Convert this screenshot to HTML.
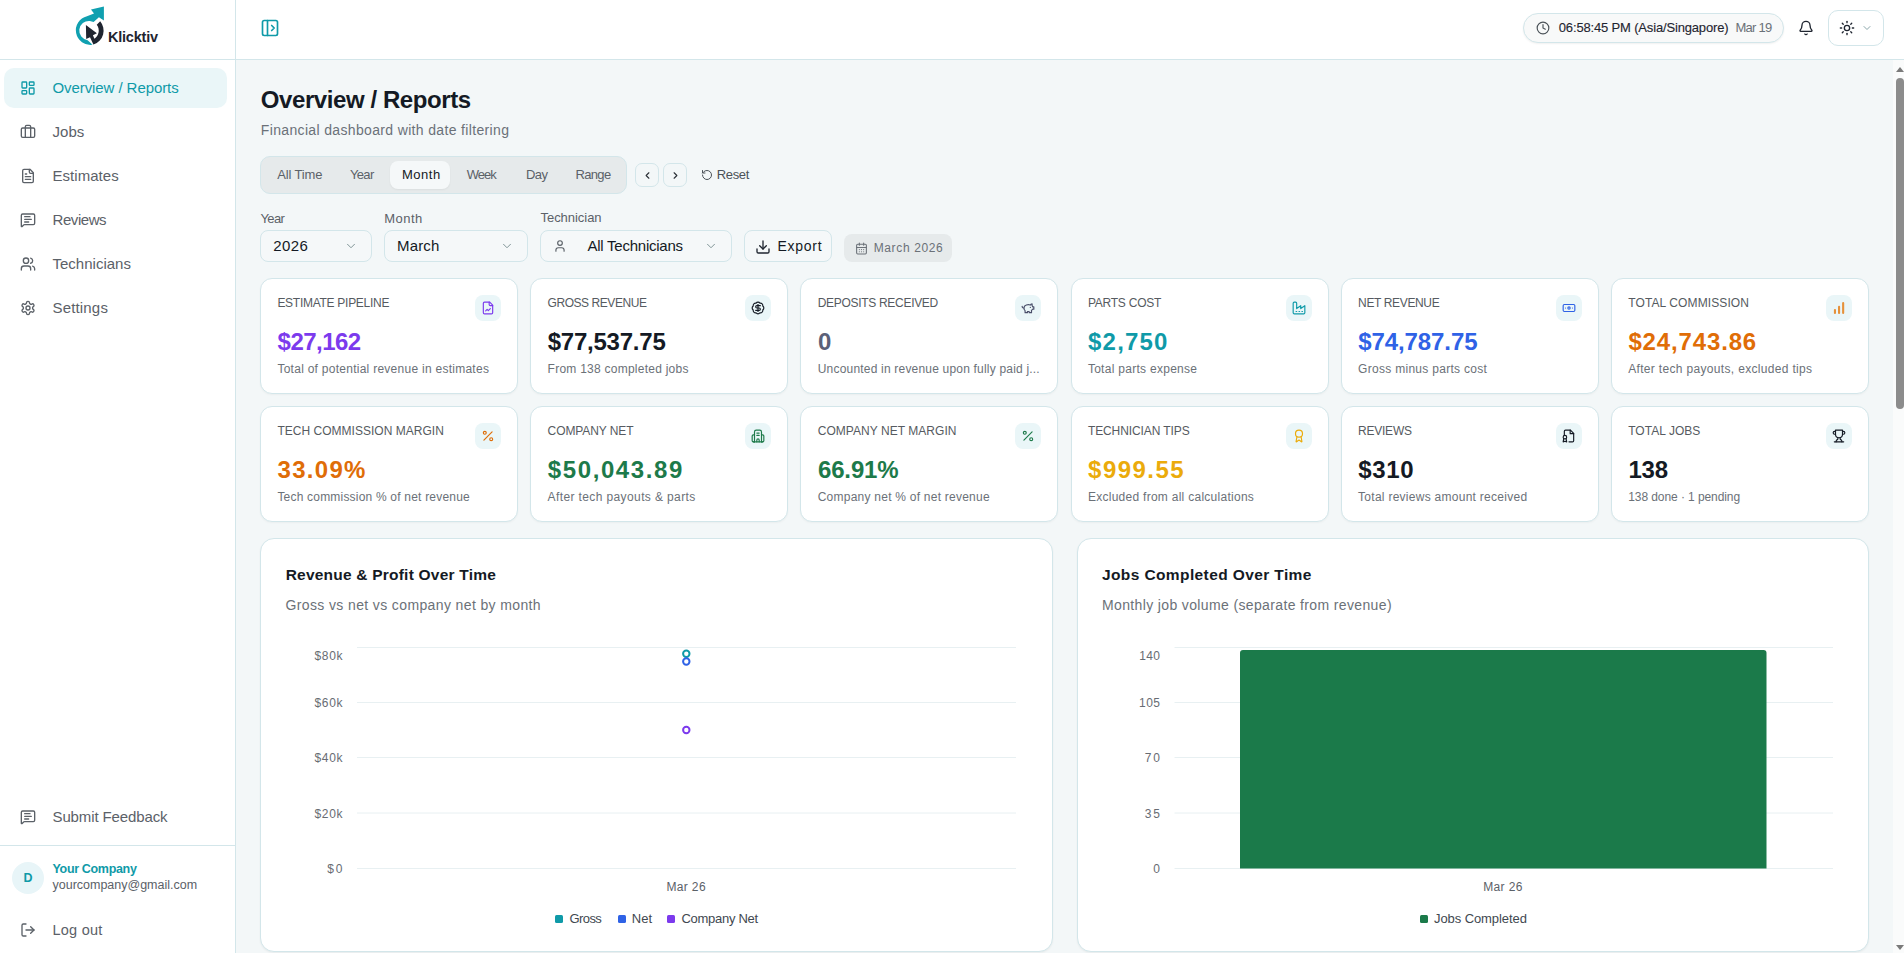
<!DOCTYPE html><html><head><meta charset="utf-8"><title>Overview / Reports</title><style>
html,body{margin:0;padding:0;width:1904px;height:953px;overflow:hidden;font-family:"Liberation Sans", sans-serif;background:#f3f7f8;}
*{box-sizing:border-box;}
</style></head><body>
<div style="position:absolute;left:0px;top:0px;width:236px;height:953px;box-sizing:border-box;background:#ffffff;border-right:1px solid #d3e6ea;"></div>
<div style="position:absolute;left:0px;top:59px;width:235px;height:1px;box-sizing:border-box;background:#d3e6ea;"></div>
<svg style="position:absolute;left:60px;top:0px" width="120" height="60" viewBox="60 0 120 60">
<path d="M92.53 44.77 A14.6 14.6 0 0 1 86.97 16.14 L94 13.6 L91 9.6 L103.9 6.4 L103.9 20.4 L98.9 17.2 L93.6 21.9 L89.85 20.94 A9.7 9.7 0 0 0 87.65 40.21 Z" fill="#10a0b0"/>
<path d="M100.18 21.22 A14.6 14.6 0 0 1 93.99 44.32 L93.55 39.16 A9.7 9.7 0 0 0 96.75 24.76 Z" fill="#1f2530"/>
<path d="M85.9 25.0 L96.9 33.2 L92.9 35.2 L95.6 41.5 L93.5 44.8 L90.0 37.2 L86.2 39.0 Z" fill="#1f2530"/>
</svg>
<div style="position:absolute;left:108px;top:29.93px;font-size:14.5px;line-height:14.5px;color:#1f2530;font-weight:700;letter-spacing:-0.219px;white-space:nowrap;">Klicktiv</div>
<div style="position:absolute;left:4px;top:68px;width:223px;height:40px;box-sizing:border-box;background:#eaf6f8;border-radius:10px;"></div>
<svg style="position:absolute;left:20px;top:80px" width="16" height="16" viewBox="0 0 24 24" fill="none" stroke="#0f9aa8" stroke-width="2" stroke-linecap="round" stroke-linejoin="round" ><rect width="7" height="9" x="3" y="3" rx="1"/><rect width="7" height="5" x="14" y="3" rx="1"/><rect width="7" height="9" x="14" y="12" rx="1"/><rect width="7" height="5" x="3" y="16" rx="1"/></svg>
<div style="position:absolute;left:52.5px;top:79.80px;font-size:15px;line-height:15px;color:#0f9aa8;font-weight:400;letter-spacing:-0.081px;white-space:nowrap;">Overview / Reports</div>
<svg style="position:absolute;left:20px;top:124px" width="16" height="16" viewBox="0 0 24 24" fill="none" stroke="#5b6168" stroke-width="2" stroke-linecap="round" stroke-linejoin="round" ><path d="M16 20V4a2 2 0 0 0-2-2h-4a2 2 0 0 0-2 2v16"/><rect width="20" height="14" x="2" y="6" rx="2"/></svg>
<div style="position:absolute;left:52.5px;top:123.80px;font-size:15px;line-height:15px;color:#5b6168;font-weight:400;letter-spacing:0.033px;white-space:nowrap;">Jobs</div>
<svg style="position:absolute;left:20px;top:168px" width="16" height="16" viewBox="0 0 24 24" fill="none" stroke="#5b6168" stroke-width="2" stroke-linecap="round" stroke-linejoin="round" ><path d="M15 2H6a2 2 0 0 0-2 2v16a2 2 0 0 0 2 2h12a2 2 0 0 0 2-2V7Z"/><path d="M14 2v4a2 2 0 0 0 2 2h4"/><path d="M10 9H8"/><path d="M16 13H8"/><path d="M16 17H8"/></svg>
<div style="position:absolute;left:52.5px;top:167.80px;font-size:15px;line-height:15px;color:#5b6168;font-weight:400;letter-spacing:0.047px;white-space:nowrap;">Estimates</div>
<svg style="position:absolute;left:20px;top:212px" width="16" height="16" viewBox="0 0 24 24" fill="none" stroke="#5b6168" stroke-width="2" stroke-linecap="round" stroke-linejoin="round" ><path d="M22 17a2 2 0 0 1-2 2H6.828a2 2 0 0 0-1.414.586l-2.202 2.202A.71.71 0 0 1 2 21.286V5a2 2 0 0 1 2-2h16a2 2 0 0 1 2 2z"/><path d="M7 11h10"/><path d="M7 15h6"/><path d="M7 7h8"/></svg>
<div style="position:absolute;left:52.5px;top:211.80px;font-size:15px;line-height:15px;color:#5b6168;font-weight:400;letter-spacing:-0.429px;white-space:nowrap;">Reviews</div>
<svg style="position:absolute;left:20px;top:256px" width="16" height="16" viewBox="0 0 24 24" fill="none" stroke="#5b6168" stroke-width="2" stroke-linecap="round" stroke-linejoin="round" ><path d="M16 21v-2a4 4 0 0 0-4-4H6a4 4 0 0 0-4 4v2"/><circle cx="9" cy="7" r="4"/><path d="M22 21v-2a4 4 0 0 0-3-3.87"/><path d="M16 3.13a4 4 0 0 1 0 7.75"/></svg>
<div style="position:absolute;left:52.5px;top:255.80px;font-size:15px;line-height:15px;color:#5b6168;font-weight:400;letter-spacing:0.005px;white-space:nowrap;">Technicians</div>
<svg style="position:absolute;left:20px;top:300px" width="16" height="16" viewBox="0 0 24 24" fill="none" stroke="#5b6168" stroke-width="2" stroke-linecap="round" stroke-linejoin="round" ><path d="M12.22 2h-.44a2 2 0 0 0-2 2v.18a2 2 0 0 1-1 1.73l-.43.25a2 2 0 0 1-2 0l-.15-.08a2 2 0 0 0-2.73.73l-.22.38a2 2 0 0 0 .73 2.73l.15.1a2 2 0 0 1 1 1.72v.51a2 2 0 0 1-1 1.74l-.15.09a2 2 0 0 0-.73 2.73l.22.38a2 2 0 0 0 2.73.73l.15-.08a2 2 0 0 1 2 0l.43.25a2 2 0 0 1 1 1.73V20a2 2 0 0 0 2 2h.44a2 2 0 0 0 2-2v-.18a2 2 0 0 1 1-1.73l.43-.25a2 2 0 0 1 2 0l.15.08a2 2 0 0 0 2.73-.73l.22-.39a2 2 0 0 0-.73-2.73l-.15-.08a2 2 0 0 1-1-1.74v-.5a2 2 0 0 1 1-1.74l.15-.09a2 2 0 0 0 .73-2.73l-.22-.38a2 2 0 0 0-2.73-.73l-.15.08a2 2 0 0 1-2 0l-.43-.25a2 2 0 0 1-1-1.73V4a2 2 0 0 0-2-2z"/><circle cx="12" cy="12" r="3"/></svg>
<div style="position:absolute;left:52.5px;top:299.80px;font-size:15px;line-height:15px;color:#5b6168;font-weight:400;letter-spacing:0.168px;white-space:nowrap;">Settings</div>
<svg style="position:absolute;left:20px;top:809px" width="16" height="16" viewBox="0 0 24 24" fill="none" stroke="#5b6168" stroke-width="2" stroke-linecap="round" stroke-linejoin="round" ><path d="M22 17a2 2 0 0 1-2 2H6.828a2 2 0 0 0-1.414.586l-2.202 2.202A.71.71 0 0 1 2 21.286V5a2 2 0 0 1 2-2h16a2 2 0 0 1 2 2z"/><path d="M7 11h10"/><path d="M7 15h6"/><path d="M7 7h8"/></svg>
<div style="position:absolute;left:52.5px;top:809.40px;font-size:15px;line-height:15px;color:#5b6168;font-weight:400;letter-spacing:-0.116px;white-space:nowrap;">Submit Feedback</div>
<div style="position:absolute;left:0px;top:845px;width:235px;height:1px;box-sizing:border-box;background:#d3e6ea;"></div>
<div style="position:absolute;left:12px;top:862px;width:32px;height:32px;box-sizing:border-box;background:#e8f5f8;border-radius:50%;"></div>
<div style="position:absolute;left:-172.00px;width:400px;top:871.72px;font-size:12.5px;line-height:12.5px;color:#0f9aa8;font-weight:700;letter-spacing:0px;white-space:nowrap;text-align:center;">D</div>
<div style="position:absolute;left:52.5px;top:862.52px;font-size:12.5px;line-height:12.5px;color:#0f9aa8;font-weight:700;letter-spacing:-0.33px;white-space:nowrap;">Your Company</div>
<div style="position:absolute;left:52.5px;top:879.42px;font-size:12.5px;line-height:12.5px;color:#5b6168;font-weight:400;letter-spacing:-0.006px;white-space:nowrap;">yourcompany@gmail.com</div>
<svg style="position:absolute;left:20px;top:922px" width="16" height="16" viewBox="0 0 24 24" fill="none" stroke="#5b6168" stroke-width="2" stroke-linecap="round" stroke-linejoin="round" ><path d="M9 21H5a2 2 0 0 1-2-2V5a2 2 0 0 1 2-2h4"/><polyline points="16 17 21 12 16 7"/><line x1="21" x2="9" y1="12" y2="12"/></svg>
<div style="position:absolute;left:52.5px;top:922.93px;font-size:14.5px;line-height:14.5px;color:#5b6168;font-weight:400;letter-spacing:0.229px;white-space:nowrap;">Log out</div>
<div style="position:absolute;left:236px;top:0px;width:1668px;height:60px;box-sizing:border-box;background:#ffffff;border-bottom:1px solid #d3e6ea;"></div>
<svg style="position:absolute;left:260px;top:18px" width="20" height="20" viewBox="0 0 24 24" fill="none" stroke="#0f9aa8" stroke-width="2" stroke-linecap="round" stroke-linejoin="round" ><rect width="18" height="18" x="3" y="3" rx="2"/><path d="M9 3v18"/><path d="m14 9 3 3-3 3"/></svg>
<div style="position:absolute;left:1523px;top:13px;width:261px;height:30px;box-sizing:border-box;background:#f8f9f9;border:1px solid #d3e6ea;border-radius:15px;box-shadow:0 1px 2px rgba(0,0,0,0.06);"></div>
<svg style="position:absolute;left:1536px;top:21px" width="14" height="14" viewBox="0 0 24 24" fill="none" stroke="#4b5258" stroke-width="2" stroke-linecap="round" stroke-linejoin="round" ><circle cx="12" cy="12" r="10"/><polyline points="12 6 12 12 16 14"/></svg>
<div style="position:absolute;left:1558.8px;top:21.00px;font-size:13px;line-height:13px;color:#1f2530;font-weight:400;letter-spacing:-0.164px;white-space:nowrap;-webkit-text-stroke:0.12px #1f2530;">06:58:45 PM (Asia/Singapore)</div>
<div style="position:absolute;left:1735.5px;top:21.00px;font-size:13px;line-height:13px;color:#6b7178;font-weight:400;letter-spacing:-0.761px;white-space:nowrap;">Mar 19</div>
<svg style="position:absolute;left:1798px;top:20px" width="16" height="16" viewBox="0 0 24 24" fill="none" stroke="#1f2530" stroke-width="2" stroke-linecap="round" stroke-linejoin="round" ><path d="M10.268 21a2 2 0 0 0 3.464 0"/><path d="M3.262 15.326A1 1 0 0 0 4 17h16a1 1 0 0 0 .74-1.673C19.41 13.956 18 12.499 18 8A6 6 0 0 0 6 8c0 4.499-1.411 5.956-2.738 7.326"/></svg>
<div style="position:absolute;left:1828px;top:10px;width:56px;height:36px;box-sizing:border-box;background:#ffffff;border:1px solid #d3e6ea;border-radius:10px;"></div>
<svg style="position:absolute;left:1839px;top:20px" width="16" height="16" viewBox="0 0 24 24" fill="none" stroke="#1f2530" stroke-width="2" stroke-linecap="round" stroke-linejoin="round" ><circle cx="12" cy="12" r="4"/><path d="M12 2v2"/><path d="M12 20v2"/><path d="m4.93 4.93 1.41 1.41"/><path d="m17.66 17.66 1.41 1.41"/><path d="M2 12h2"/><path d="M20 12h2"/><path d="m6.34 17.66-1.41 1.41"/><path d="m19.07 4.93-1.41 1.41"/></svg>
<svg style="position:absolute;left:1861px;top:22px" width="12" height="12" viewBox="0 0 24 24" fill="none" stroke="#8aa6aa" stroke-width="2" stroke-linecap="round" stroke-linejoin="round" ><path d="m6 9 6 6 6-6"/></svg>
<div style="position:absolute;left:1893px;top:60px;width:11px;height:893px;box-sizing:border-box;background:#fafbfb;"></div>
<div style="position:absolute;left:1896px;top:78px;width:8px;height:331px;box-sizing:border-box;background:#8c8c8c;border-radius:4px;"></div>
<div style="position:absolute;left:1895.5px;top:66.5px;width:0;height:0;border-left:4.5px solid transparent;border-right:4.5px solid transparent;border-bottom:5px solid #7a7a7a;"></div>
<div style="position:absolute;left:1895.5px;top:945px;width:0;height:0;border-left:4.5px solid transparent;border-right:4.5px solid transparent;border-top:5px solid #7a7a7a;"></div>
<div style="position:absolute;left:260.8px;top:87.68px;font-size:24px;line-height:24px;color:#141a24;font-weight:700;letter-spacing:-0.419px;white-space:nowrap;">Overview / Reports</div>
<div style="position:absolute;left:260.8px;top:122.85px;font-size:14px;line-height:14px;color:#6b7178;font-weight:400;letter-spacing:0.346px;white-space:nowrap;">Financial dashboard with date filtering</div>
<div style="position:absolute;left:260px;top:156px;width:367px;height:38px;box-sizing:border-box;background:#e6eaeb;border:1px solid #d3e6ea;border-radius:10px;"></div>
<div style="position:absolute;left:390px;top:161px;width:60px;height:28px;box-sizing:border-box;background:#f5f8f9;border-radius:8px;box-shadow:0 1px 2px rgba(0,0,0,0.05);"></div>
<div style="position:absolute;left:277.3px;top:168.00px;font-size:13px;line-height:13px;color:#5b6168;font-weight:400;letter-spacing:-0.147px;white-space:nowrap;">All Time</div>
<div style="position:absolute;left:350px;top:168.00px;font-size:13px;line-height:13px;color:#5b6168;font-weight:400;letter-spacing:-0.68px;white-space:nowrap;">Year</div>
<div style="position:absolute;left:402px;top:168.00px;font-size:13px;line-height:13px;color:#141a24;font-weight:400;letter-spacing:0.511px;white-space:nowrap;">Month</div>
<div style="position:absolute;left:466.8px;top:168.00px;font-size:13px;line-height:13px;color:#5b6168;font-weight:400;letter-spacing:-0.985px;white-space:nowrap;">Week</div>
<div style="position:absolute;left:526px;top:168.00px;font-size:13px;line-height:13px;color:#5b6168;font-weight:400;letter-spacing:-0.55px;white-space:nowrap;">Day</div>
<div style="position:absolute;left:575.5px;top:168.00px;font-size:13px;line-height:13px;color:#5b6168;font-weight:400;letter-spacing:-0.665px;white-space:nowrap;">Range</div>
<div style="position:absolute;left:635px;top:163px;width:24px;height:24px;box-sizing:border-box;border:1px solid #d3e6ea;border-radius:7px;"></div>
<div style="position:absolute;left:663px;top:163px;width:24px;height:24px;box-sizing:border-box;border:1px solid #d3e6ea;border-radius:7px;"></div>
<svg style="position:absolute;left:641.5px;top:169.5px" width="11" height="11" viewBox="0 0 24 24" fill="none" stroke="#2a2f36" stroke-width="2.4" stroke-linecap="round" stroke-linejoin="round" ><path d="m15 18-6-6 6-6"/></svg>
<svg style="position:absolute;left:669.5px;top:169.5px" width="11" height="11" viewBox="0 0 24 24" fill="none" stroke="#2a2f36" stroke-width="2.4" stroke-linecap="round" stroke-linejoin="round" ><path d="m9 18 6-6-6-6"/></svg>
<svg style="position:absolute;left:701px;top:169px" width="12" height="12" viewBox="0 0 24 24" fill="none" stroke="#4b5258" stroke-width="2" stroke-linecap="round" stroke-linejoin="round" ><path d="M3 12a9 9 0 1 0 9-9 9.75 9.75 0 0 0-6.74 2.74L3 8"/><path d="M3 3v5h5"/></svg>
<div style="position:absolute;left:716.8px;top:168.00px;font-size:13px;line-height:13px;color:#4b5258;font-weight:400;letter-spacing:-0.356px;white-space:nowrap;">Reset</div>
<div style="position:absolute;left:260.5px;top:212.00px;font-size:13px;line-height:13px;color:#5b6168;font-weight:400;letter-spacing:-0.647px;white-space:nowrap;">Year</div>
<div style="position:absolute;left:384.3px;top:212.00px;font-size:13px;line-height:13px;color:#5b6168;font-weight:400;letter-spacing:0.436px;white-space:nowrap;">Month</div>
<div style="position:absolute;left:540.5px;top:211.20px;font-size:13px;line-height:13px;color:#5b6168;font-weight:400;letter-spacing:-0.036px;white-space:nowrap;">Technician</div>
<div style="position:absolute;left:260px;top:230px;width:112px;height:32px;box-sizing:border-box;background:#f5f8f9;border:1px solid #d3e6ea;border-radius:8px;"></div>
<div style="position:absolute;left:273.3px;top:238.20px;font-size:15px;line-height:15px;color:#141a24;font-weight:400;letter-spacing:0.425px;white-space:nowrap;">2026</div>
<svg style="position:absolute;left:343.6px;top:239px" width="14" height="14" viewBox="0 0 24 24" fill="none" stroke="#7f9496" stroke-width="1.7" stroke-linecap="round" stroke-linejoin="round" ><path d="m6 9 6 6 6-6"/></svg>
<div style="position:absolute;left:384px;top:230px;width:144px;height:32px;box-sizing:border-box;background:#f5f8f9;border:1px solid #d3e6ea;border-radius:8px;"></div>
<div style="position:absolute;left:397px;top:238.20px;font-size:15px;line-height:15px;color:#141a24;font-weight:400;letter-spacing:0.162px;white-space:nowrap;">March</div>
<svg style="position:absolute;left:500px;top:239px" width="14" height="14" viewBox="0 0 24 24" fill="none" stroke="#7f9496" stroke-width="1.7" stroke-linecap="round" stroke-linejoin="round" ><path d="m6 9 6 6 6-6"/></svg>
<div style="position:absolute;left:540px;top:230px;width:192px;height:32px;box-sizing:border-box;background:#f5f8f9;border:1px solid #d3e6ea;border-radius:8px;"></div>
<div style="position:absolute;left:587.5px;top:238.20px;font-size:15px;line-height:15px;color:#141a24;font-weight:400;letter-spacing:-0.243px;white-space:nowrap;">All Technicians</div>
<svg style="position:absolute;left:704.3px;top:239px" width="14" height="14" viewBox="0 0 24 24" fill="none" stroke="#7f9496" stroke-width="1.7" stroke-linecap="round" stroke-linejoin="round" ><path d="m6 9 6 6 6-6"/></svg>
<svg style="position:absolute;left:553px;top:239px" width="14" height="14" viewBox="0 0 24 24" fill="none" stroke="#5b6168" stroke-width="2" stroke-linecap="round" stroke-linejoin="round" ><path d="M19 21v-2a4 4 0 0 0-4-4H9a4 4 0 0 0-4 4v2"/><circle cx="12" cy="7" r="4"/></svg>
<div style="position:absolute;left:744px;top:230px;width:88px;height:32px;box-sizing:border-box;background:#f5f8f9;border:1px solid #d3e6ea;border-radius:8px;"></div>
<svg style="position:absolute;left:755px;top:238.5px" width="16" height="16" viewBox="0 0 24 24" fill="none" stroke="#1f2530" stroke-width="2" stroke-linecap="round" stroke-linejoin="round" ><path d="M21 15v4a2 2 0 0 1-2 2H5a2 2 0 0 1-2-2v-4"/><polyline points="7 10 12 15 17 10"/><line x1="12" x2="12" y1="15" y2="3"/></svg>
<div style="position:absolute;left:777.4px;top:239.25px;font-size:14px;line-height:14px;color:#141a24;font-weight:400;letter-spacing:0.74px;white-space:nowrap;">Export</div>
<div style="position:absolute;left:844px;top:234px;width:108px;height:28px;box-sizing:border-box;background:#e6eaeb;border-radius:8px;"></div>
<svg style="position:absolute;left:854.5px;top:241.5px" width="13" height="13" viewBox="0 0 24 24" fill="none" stroke="#6b7178" stroke-width="2" stroke-linecap="round" stroke-linejoin="round" ><path d="M8 2v4"/><path d="M16 2v4"/><rect width="18" height="18" x="3" y="4" rx="2"/><path d="M3 10h18"/><path d="M8 14h.01"/><path d="M12 14h.01"/><path d="M16 14h.01"/><path d="M8 18h.01"/><path d="M12 18h.01"/><path d="M16 18h.01"/></svg>
<div style="position:absolute;left:873.7px;top:241.64px;font-size:12px;line-height:12px;color:#6b7178;font-weight:400;letter-spacing:0.631px;white-space:nowrap;">March 2026</div>
<div style="position:absolute;left:260.0px;top:278px;width:258.17px;height:116px;box-sizing:border-box;background:#ffffff;border:1px solid #d3e6ea;border-radius:12px;box-shadow:0 1px 2px rgba(0,0,0,0.04);"></div>
<div style="position:absolute;left:277.4px;top:297.04px;font-size:12px;line-height:12px;color:#565b61;font-weight:400;letter-spacing:-0.276px;white-space:nowrap;">ESTIMATE PIPELINE</div>
<div style="position:absolute;left:475.0px;top:295px;width:26px;height:26px;box-sizing:border-box;background:#eaf6f8;border-radius:8px;"></div>
<svg style="position:absolute;left:481.0px;top:301px" width="14" height="14" viewBox="0 0 24 24" fill="none" stroke="#7c3aed" stroke-width="2" stroke-linecap="round" stroke-linejoin="round" ><path d="M15 2H6a2 2 0 0 0-2 2v16a2 2 0 0 0 2 2h12a2 2 0 0 0 2-2V7Z"/><path d="M14 2v4a2 2 0 0 0 2 2h4"/><path d="m16 13-3.5 3.5-2-2L8 17"/></svg>
<div style="position:absolute;left:277.6px;top:329.68px;font-size:24px;line-height:24px;color:#7c3aed;font-weight:700;letter-spacing:-0.523px;white-space:nowrap;">$27,162</div>
<div style="position:absolute;left:277.4px;top:362.84px;font-size:12px;line-height:12px;color:#6b7178;font-weight:400;letter-spacing:0.265px;white-space:nowrap;">Total of potential revenue in estimates</div>
<div style="position:absolute;left:530.17px;top:278px;width:258.17px;height:116px;box-sizing:border-box;background:#ffffff;border:1px solid #d3e6ea;border-radius:12px;box-shadow:0 1px 2px rgba(0,0,0,0.04);"></div>
<div style="position:absolute;left:547.5699999999999px;top:297.04px;font-size:12px;line-height:12px;color:#565b61;font-weight:400;letter-spacing:-0.447px;white-space:nowrap;">GROSS REVENUE</div>
<div style="position:absolute;left:745.17px;top:295px;width:26px;height:26px;box-sizing:border-box;background:#eaf6f8;border-radius:8px;"></div>
<svg style="position:absolute;left:751.17px;top:301px" width="14" height="14" viewBox="0 0 24 24" fill="none" stroke="#141a24" stroke-width="2" stroke-linecap="round" stroke-linejoin="round" ><path d="M3.85 8.62a4 4 0 0 1 4.78-4.77 4 4 0 0 1 6.74 0 4 4 0 0 1 4.78 4.78 4 4 0 0 1 0 6.74 4 4 0 0 1-4.77 4.78 4 4 0 0 1-6.75 0 4 4 0 0 1-4.78-4.77 4 4 0 0 1 0-6.76Z"/><path d="M16 8h-6a2 2 0 1 0 0 4h4a2 2 0 1 1 0 4H8"/><path d="M12 18V6"/></svg>
<div style="position:absolute;left:547.77px;top:329.68px;font-size:24px;line-height:24px;color:#141a24;font-weight:700;letter-spacing:-0.24px;white-space:nowrap;">$77,537.75</div>
<div style="position:absolute;left:547.5699999999999px;top:362.84px;font-size:12px;line-height:12px;color:#6b7178;font-weight:400;letter-spacing:0.248px;white-space:nowrap;">From 138 completed jobs</div>
<div style="position:absolute;left:800.33px;top:278px;width:258.17px;height:116px;box-sizing:border-box;background:#ffffff;border:1px solid #d3e6ea;border-radius:12px;box-shadow:0 1px 2px rgba(0,0,0,0.04);"></div>
<div style="position:absolute;left:817.73px;top:297.04px;font-size:12px;line-height:12px;color:#565b61;font-weight:400;letter-spacing:-0.303px;white-space:nowrap;">DEPOSITS RECEIVED</div>
<div style="position:absolute;left:1015.33px;top:295px;width:26px;height:26px;box-sizing:border-box;background:#eaf6f8;border-radius:8px;"></div>
<svg style="position:absolute;left:1021.33px;top:301px" width="14" height="14" viewBox="0 0 24 24" fill="none" stroke="#4a4f6a" stroke-width="2" stroke-linecap="round" stroke-linejoin="round" ><path d="M19 5c-1.5 0-2.8 1.4-3 2-3.5-1.5-11-.3-11 5 0 1.8 0 3 2 4.5V20h4v-2h3v2h4v-4c1-.5 1.7-1 2-2h2v-4h-2c0-1-.5-1.5-1-2V5z"/><path d="M2 9v1c0 1.1.9 2 2 2h1"/><path d="M16 11h.01"/></svg>
<div style="position:absolute;left:817.9300000000001px;top:329.68px;font-size:24px;line-height:24px;color:#5b6178;font-weight:700;letter-spacing:0px;white-space:nowrap;">0</div>
<div style="position:absolute;left:817.73px;top:362.84px;font-size:12px;line-height:12px;color:#6b7178;font-weight:400;letter-spacing:0.196px;white-space:nowrap;">Uncounted in revenue upon fully paid j...</div>
<div style="position:absolute;left:1070.5px;top:278px;width:258.17px;height:116px;box-sizing:border-box;background:#ffffff;border:1px solid #d3e6ea;border-radius:12px;box-shadow:0 1px 2px rgba(0,0,0,0.04);"></div>
<div style="position:absolute;left:1087.9px;top:297.04px;font-size:12px;line-height:12px;color:#565b61;font-weight:400;letter-spacing:-0.238px;white-space:nowrap;">PARTS COST</div>
<div style="position:absolute;left:1285.5px;top:295px;width:26px;height:26px;box-sizing:border-box;background:#eaf6f8;border-radius:8px;"></div>
<svg style="position:absolute;left:1291.5px;top:301px" width="14" height="14" viewBox="0 0 24 24" fill="none" stroke="#0f9aa8" stroke-width="2" stroke-linecap="round" stroke-linejoin="round" ><path d="M2 20a2 2 0 0 0 2 2h16a2 2 0 0 0 2-2V8l-7 5V8l-7 5V4a2 2 0 0 0-2-2H4a2 2 0 0 0-2 2Z"/><path d="M17 18h1"/><path d="M12 18h1"/><path d="M7 18h1"/></svg>
<div style="position:absolute;left:1088.1px;top:329.68px;font-size:24px;line-height:24px;color:#0f9aa8;font-weight:700;letter-spacing:1.176px;white-space:nowrap;">$2,750</div>
<div style="position:absolute;left:1087.9px;top:362.84px;font-size:12px;line-height:12px;color:#6b7178;font-weight:400;letter-spacing:0.28px;white-space:nowrap;">Total parts expense</div>
<div style="position:absolute;left:1340.67px;top:278px;width:258.17px;height:116px;box-sizing:border-box;background:#ffffff;border:1px solid #d3e6ea;border-radius:12px;box-shadow:0 1px 2px rgba(0,0,0,0.04);"></div>
<div style="position:absolute;left:1358.0700000000002px;top:297.04px;font-size:12px;line-height:12px;color:#565b61;font-weight:400;letter-spacing:-0.35px;white-space:nowrap;">NET REVENUE</div>
<div style="position:absolute;left:1555.67px;top:295px;width:26px;height:26px;box-sizing:border-box;background:#eaf6f8;border-radius:8px;"></div>
<svg style="position:absolute;left:1561.67px;top:301px" width="14" height="14" viewBox="0 0 24 24" fill="none" stroke="#2f62e6" stroke-width="2" stroke-linecap="round" stroke-linejoin="round" ><rect width="20" height="12" x="2" y="6" rx="2"/><circle cx="12" cy="12" r="2"/><path d="M6 12h.01M18 12h.01"/></svg>
<div style="position:absolute;left:1358.27px;top:329.68px;font-size:24px;line-height:24px;color:#2f62e6;font-weight:700;letter-spacing:-0.096px;white-space:nowrap;">$74,787.75</div>
<div style="position:absolute;left:1358.0700000000002px;top:362.84px;font-size:12px;line-height:12px;color:#6b7178;font-weight:400;letter-spacing:0.291px;white-space:nowrap;">Gross minus parts cost</div>
<div style="position:absolute;left:1610.83px;top:278px;width:258.17px;height:116px;box-sizing:border-box;background:#ffffff;border:1px solid #d3e6ea;border-radius:12px;box-shadow:0 1px 2px rgba(0,0,0,0.04);"></div>
<div style="position:absolute;left:1628.23px;top:297.04px;font-size:12px;line-height:12px;color:#565b61;font-weight:400;letter-spacing:0.107px;white-space:nowrap;">TOTAL COMMISSION</div>
<div style="position:absolute;left:1825.83px;top:295px;width:26px;height:26px;box-sizing:border-box;background:#eaf6f8;border-radius:8px;"></div>
<svg style="position:absolute;left:1825.83px;top:295px" width="26" height="26" viewBox="0 0 26 26"><rect x="7.9" y="14.1" width="2.1" height="4.9" rx="1" fill="#e6913a"/><rect x="12" y="10.7" width="2.1" height="8.3" rx="1" fill="#e6913a"/><rect x="16.1" y="7" width="2.1" height="12" rx="1" fill="#e6913a"/></svg>
<div style="position:absolute;left:1628.4299999999998px;top:329.68px;font-size:24px;line-height:24px;color:#e06d06;font-weight:700;letter-spacing:0.853px;white-space:nowrap;">$24,743.86</div>
<div style="position:absolute;left:1628.23px;top:362.84px;font-size:12px;line-height:12px;color:#6b7178;font-weight:400;letter-spacing:0.327px;white-space:nowrap;">After tech payouts, excluded tips</div>
<div style="position:absolute;left:260.0px;top:406px;width:258.17px;height:116px;box-sizing:border-box;background:#ffffff;border:1px solid #d3e6ea;border-radius:12px;box-shadow:0 1px 2px rgba(0,0,0,0.04);"></div>
<div style="position:absolute;left:277.4px;top:425.04px;font-size:12px;line-height:12px;color:#565b61;font-weight:400;letter-spacing:0.021px;white-space:nowrap;">TECH COMMISSION MARGIN</div>
<div style="position:absolute;left:475.0px;top:423px;width:26px;height:26px;box-sizing:border-box;background:#eaf6f8;border-radius:8px;"></div>
<svg style="position:absolute;left:481.0px;top:429px" width="14" height="14" viewBox="0 0 24 24" fill="none" stroke="#df6d07" stroke-width="2" stroke-linecap="round" stroke-linejoin="round" ><line x1="19" x2="5" y1="5" y2="19"/><circle cx="6.5" cy="6.5" r="2.5"/><circle cx="17.5" cy="17.5" r="2.5"/></svg>
<div style="position:absolute;left:277.6px;top:457.68px;font-size:24px;line-height:24px;color:#df6d07;font-weight:700;letter-spacing:1.284px;white-space:nowrap;">33.09%</div>
<div style="position:absolute;left:277.4px;top:490.84px;font-size:12px;line-height:12px;color:#6b7178;font-weight:400;letter-spacing:0.201px;white-space:nowrap;">Tech commission % of net revenue</div>
<div style="position:absolute;left:530.17px;top:406px;width:258.17px;height:116px;box-sizing:border-box;background:#ffffff;border:1px solid #d3e6ea;border-radius:12px;box-shadow:0 1px 2px rgba(0,0,0,0.04);"></div>
<div style="position:absolute;left:547.5699999999999px;top:425.04px;font-size:12px;line-height:12px;color:#565b61;font-weight:400;letter-spacing:-0.084px;white-space:nowrap;">COMPANY NET</div>
<div style="position:absolute;left:745.17px;top:423px;width:26px;height:26px;box-sizing:border-box;background:#eaf6f8;border-radius:8px;"></div>
<svg style="position:absolute;left:751.17px;top:429px" width="14" height="14" viewBox="0 0 24 24" fill="none" stroke="#1d7a4a" stroke-width="2" stroke-linecap="round" stroke-linejoin="round" ><path d="M6 22V5a3 3 0 0 1 3-3h6a3 3 0 0 1 3 3v17"/><path d="M6 10H4a2 2 0 0 0-2 2v8a2 2 0 0 0 2 2h2"/><path d="M18 10h2a2 2 0 0 1 2 2v8a2 2 0 0 1-2 2h-2"/><path d="M10 7h4"/><path d="M10 11h4"/><path d="M10 22v-3a2 2 0 0 1 4 0v3"/><path d="M4 22h16"/></svg>
<div style="position:absolute;left:547.77px;top:457.68px;font-size:24px;line-height:24px;color:#1d7a4a;font-weight:700;letter-spacing:1.609px;white-space:nowrap;">$50,043.89</div>
<div style="position:absolute;left:547.5699999999999px;top:490.84px;font-size:12px;line-height:12px;color:#6b7178;font-weight:400;letter-spacing:0.386px;white-space:nowrap;">After tech payouts &amp; parts</div>
<div style="position:absolute;left:800.33px;top:406px;width:258.17px;height:116px;box-sizing:border-box;background:#ffffff;border:1px solid #d3e6ea;border-radius:12px;box-shadow:0 1px 2px rgba(0,0,0,0.04);"></div>
<div style="position:absolute;left:817.73px;top:425.04px;font-size:12px;line-height:12px;color:#565b61;font-weight:400;letter-spacing:0.045px;white-space:nowrap;">COMPANY NET MARGIN</div>
<div style="position:absolute;left:1015.33px;top:423px;width:26px;height:26px;box-sizing:border-box;background:#eaf6f8;border-radius:8px;"></div>
<svg style="position:absolute;left:1021.33px;top:429px" width="14" height="14" viewBox="0 0 24 24" fill="none" stroke="#1d7a4a" stroke-width="2" stroke-linecap="round" stroke-linejoin="round" ><line x1="19" x2="5" y1="5" y2="19"/><circle cx="6.5" cy="6.5" r="2.5"/><circle cx="17.5" cy="17.5" r="2.5"/></svg>
<div style="position:absolute;left:817.9300000000001px;top:457.68px;font-size:24px;line-height:24px;color:#1d7a4a;font-weight:700;letter-spacing:-0.128px;white-space:nowrap;">66.91%</div>
<div style="position:absolute;left:817.73px;top:490.84px;font-size:12px;line-height:12px;color:#6b7178;font-weight:400;letter-spacing:0.238px;white-space:nowrap;">Company net % of net revenue</div>
<div style="position:absolute;left:1070.5px;top:406px;width:258.17px;height:116px;box-sizing:border-box;background:#ffffff;border:1px solid #d3e6ea;border-radius:12px;box-shadow:0 1px 2px rgba(0,0,0,0.04);"></div>
<div style="position:absolute;left:1087.9px;top:425.04px;font-size:12px;line-height:12px;color:#565b61;font-weight:400;letter-spacing:-0.093px;white-space:nowrap;">TECHNICIAN TIPS</div>
<div style="position:absolute;left:1285.5px;top:423px;width:26px;height:26px;box-sizing:border-box;background:#eaf6f8;border-radius:8px;"></div>
<svg style="position:absolute;left:1291.5px;top:429px" width="14" height="14" viewBox="0 0 24 24" fill="none" stroke="#ebab0b" stroke-width="2" stroke-linecap="round" stroke-linejoin="round" ><path d="m15.477 12.89 1.515 8.526a.5.5 0 0 1-.81.47l-3.58-2.687a1 1 0 0 0-1.197 0l-3.586 2.686a.5.5 0 0 1-.81-.469l1.514-8.526"/><circle cx="12" cy="8" r="6"/></svg>
<div style="position:absolute;left:1088.1px;top:457.68px;font-size:24px;line-height:24px;color:#ebab0b;font-weight:700;letter-spacing:1.45px;white-space:nowrap;">$999.55</div>
<div style="position:absolute;left:1087.9px;top:490.84px;font-size:12px;line-height:12px;color:#6b7178;font-weight:400;letter-spacing:0.272px;white-space:nowrap;">Excluded from all calculations</div>
<div style="position:absolute;left:1340.67px;top:406px;width:258.17px;height:116px;box-sizing:border-box;background:#ffffff;border:1px solid #d3e6ea;border-radius:12px;box-shadow:0 1px 2px rgba(0,0,0,0.04);"></div>
<div style="position:absolute;left:1358.0700000000002px;top:425.04px;font-size:12px;line-height:12px;color:#565b61;font-weight:400;letter-spacing:-0.237px;white-space:nowrap;">REVIEWS</div>
<div style="position:absolute;left:1555.67px;top:423px;width:26px;height:26px;box-sizing:border-box;background:#eaf6f8;border-radius:8px;"></div>
<svg style="position:absolute;left:1561.67px;top:429px" width="14" height="14" viewBox="0 0 24 24" fill="none" stroke="#141a24" stroke-width="2" stroke-linecap="round" stroke-linejoin="round" ><path d="M4 10V4a2 2 0 0 1 2-2h8.5L20 7.5V20a2 2 0 0 1-2 2h-6"/><path d="M14 2v6h6"/><circle cx="5" cy="14" r="3"/><path d="M7 16.5 8 22l-3-1-3 1 1-5.5"/></svg>
<div style="position:absolute;left:1358.27px;top:457.68px;font-size:24px;line-height:24px;color:#141a24;font-weight:700;letter-spacing:0.607px;white-space:nowrap;">$310</div>
<div style="position:absolute;left:1358.0700000000002px;top:490.84px;font-size:12px;line-height:12px;color:#6b7178;font-weight:400;letter-spacing:0.272px;white-space:nowrap;">Total reviews amount received</div>
<div style="position:absolute;left:1610.83px;top:406px;width:258.17px;height:116px;box-sizing:border-box;background:#ffffff;border:1px solid #d3e6ea;border-radius:12px;box-shadow:0 1px 2px rgba(0,0,0,0.04);"></div>
<div style="position:absolute;left:1628.23px;top:425.04px;font-size:12px;line-height:12px;color:#565b61;font-weight:400;letter-spacing:0.036px;white-space:nowrap;">TOTAL JOBS</div>
<div style="position:absolute;left:1825.83px;top:423px;width:26px;height:26px;box-sizing:border-box;background:#eaf6f8;border-radius:8px;"></div>
<svg style="position:absolute;left:1831.83px;top:429px" width="14" height="14" viewBox="0 0 24 24" fill="none" stroke="#141a24" stroke-width="2" stroke-linecap="round" stroke-linejoin="round" ><path d="M6 9H4.5a2.5 2.5 0 0 1 0-5H6"/><path d="M18 9h1.5a2.5 2.5 0 0 0 0-5H18"/><path d="M4 22h16"/><path d="M10 14.66V17c0 .55-.47.98-.97 1.21C7.85 18.75 7 20.24 7 22"/><path d="M14 14.66V17c0 .55.47.98.97 1.21C16.15 18.75 17 20.24 17 22"/><path d="M18 2H6v7a6 6 0 0 0 12 0V2Z"/></svg>
<div style="position:absolute;left:1628.4299999999998px;top:457.68px;font-size:24px;line-height:24px;color:#141a24;font-weight:700;letter-spacing:-0.2px;white-space:nowrap;">138</div>
<div style="position:absolute;left:1628.23px;top:490.84px;font-size:12px;line-height:12px;color:#6b7178;font-weight:400;letter-spacing:-0.08px;white-space:nowrap;">138 done · 1 pending</div>
<div style="position:absolute;left:260px;top:538px;width:792.5px;height:414px;box-sizing:border-box;background:#ffffff;border:1px solid #d3e6ea;border-radius:14px;box-shadow:0 1px 2px rgba(0,0,0,0.05);"></div>
<div style="position:absolute;left:1076.5px;top:538px;width:792.5px;height:414px;box-sizing:border-box;background:#ffffff;border:1px solid #d3e6ea;border-radius:14px;box-shadow:0 1px 2px rgba(0,0,0,0.05);"></div>
<div style="position:absolute;left:285.7px;top:567.08px;font-size:15.5px;line-height:15.5px;color:#141a24;font-weight:700;letter-spacing:0.215px;white-space:nowrap;">Revenue &amp; Profit Over Time</div>
<div style="position:absolute;left:285.5px;top:598.15px;font-size:14px;line-height:14px;color:#6b7178;font-weight:400;letter-spacing:0.375px;white-space:nowrap;">Gross vs net vs company net by month</div>
<div style="position:absolute;left:1102px;top:567.08px;font-size:15.5px;line-height:15.5px;color:#141a24;font-weight:700;letter-spacing:0.39px;white-space:nowrap;">Jobs Completed Over Time</div>
<div style="position:absolute;left:1102px;top:598.15px;font-size:14px;line-height:14px;color:#6b7178;font-weight:400;letter-spacing:0.363px;white-space:nowrap;">Monthly job volume (separate from revenue)</div>
<svg style="position:absolute;left:0;top:0" width="1904" height="953"><line x1="357" x2="1016" y1="647.5" y2="647.5" stroke="#e8f0f2" stroke-width="1"/><line x1="1174.5" x2="1833" y1="647.5" y2="647.5" stroke="#e8f0f2" stroke-width="1"/><line x1="357" x2="1016" y1="702.5" y2="702.5" stroke="#e8f0f2" stroke-width="1"/><line x1="1174.5" x2="1833" y1="702.5" y2="702.5" stroke="#e8f0f2" stroke-width="1"/><line x1="357" x2="1016" y1="757.5" y2="757.5" stroke="#e8f0f2" stroke-width="1"/><line x1="1174.5" x2="1833" y1="757.5" y2="757.5" stroke="#e8f0f2" stroke-width="1"/><line x1="357" x2="1016" y1="813" y2="813" stroke="#e8f0f2" stroke-width="1"/><line x1="1174.5" x2="1833" y1="813" y2="813" stroke="#e8f0f2" stroke-width="1"/><line x1="357" x2="1016" y1="868.5" y2="868.5" stroke="#e8f0f2" stroke-width="1"/><line x1="1174.5" x2="1833" y1="868.5" y2="868.5" stroke="#e8f0f2" stroke-width="1"/><path d="M1240 868.5 V653 Q1240 650 1243 650 H1763.5 Q1766.5 650 1766.5 653 V868.5 Z" fill="#1b7a4a"/><circle cx="686.3" cy="653.7" r="3.2" fill="#fff" stroke="#0f9aa8" stroke-width="2"/><circle cx="686.3" cy="661.5" r="3.2" fill="#fff" stroke="#2f62e6" stroke-width="2"/><circle cx="686.3" cy="730" r="3.2" fill="#fff" stroke="#7c3aed" stroke-width="2"/></svg>
<div style="position:absolute;right:1560.81px;top:649.74px;font-size:12px;line-height:12px;color:#676c73;font-weight:400;letter-spacing:0.693px;white-space:nowrap;text-align:right;">$80k</div>
<div style="position:absolute;right:1560.81px;top:696.84px;font-size:12px;line-height:12px;color:#676c73;font-weight:400;letter-spacing:0.693px;white-space:nowrap;text-align:right;">$60k</div>
<div style="position:absolute;right:1560.81px;top:751.84px;font-size:12px;line-height:12px;color:#676c73;font-weight:400;letter-spacing:0.693px;white-space:nowrap;text-align:right;">$40k</div>
<div style="position:absolute;right:1560.81px;top:807.84px;font-size:12px;line-height:12px;color:#676c73;font-weight:400;letter-spacing:0.693px;white-space:nowrap;text-align:right;">$20k</div>
<div style="position:absolute;right:1559.58px;top:862.84px;font-size:12px;line-height:12px;color:#676c73;font-weight:400;letter-spacing:1.92px;white-space:nowrap;text-align:right;">$0</div>
<div style="position:absolute;right:743.58px;top:649.74px;font-size:12px;line-height:12px;color:#676c73;font-weight:400;letter-spacing:0.42px;white-space:nowrap;text-align:right;">140</div>
<div style="position:absolute;right:743.55px;top:696.84px;font-size:12px;line-height:12px;color:#676c73;font-weight:400;letter-spacing:0.45px;white-space:nowrap;text-align:right;">105</div>
<div style="position:absolute;right:742.10px;top:751.84px;font-size:12px;line-height:12px;color:#676c73;font-weight:400;letter-spacing:1.9px;white-space:nowrap;text-align:right;">70</div>
<div style="position:absolute;right:742.16px;top:807.84px;font-size:12px;line-height:12px;color:#676c73;font-weight:400;letter-spacing:1.84px;white-space:nowrap;text-align:right;">35</div>
<div style="position:absolute;right:744.00px;top:862.84px;font-size:12px;line-height:12px;color:#676c73;font-weight:400;letter-spacing:0px;white-space:nowrap;text-align:right;">0</div>
<div style="position:absolute;left:486.18px;width:400px;top:880.84px;font-size:12px;line-height:12px;color:#5b6168;font-weight:400;letter-spacing:0.364px;white-space:nowrap;text-align:center;">Mar 26</div>
<div style="position:absolute;left:1302.98px;width:400px;top:880.84px;font-size:12px;line-height:12px;color:#5b6168;font-weight:400;letter-spacing:0.364px;white-space:nowrap;text-align:center;">Mar 26</div>
<div style="position:absolute;left:554.5px;top:915px;width:8px;height:8px;box-sizing:border-box;background:#0f9aa8;border-radius:1.5px;"></div>
<div style="position:absolute;left:569.6px;top:912.30px;font-size:13px;line-height:13px;color:#414850;font-weight:400;letter-spacing:-0.61px;white-space:nowrap;">Gross</div>
<div style="position:absolute;left:618px;top:915px;width:8px;height:8px;box-sizing:border-box;background:#2f62e6;border-radius:1.5px;"></div>
<div style="position:absolute;left:631.8px;top:912.30px;font-size:13px;line-height:13px;color:#414850;font-weight:400;letter-spacing:-0.005px;white-space:nowrap;">Net</div>
<div style="position:absolute;left:667px;top:915px;width:8px;height:8px;box-sizing:border-box;background:#7c3aed;border-radius:1.5px;"></div>
<div style="position:absolute;left:681.5px;top:912.30px;font-size:13px;line-height:13px;color:#414850;font-weight:400;letter-spacing:-0.281px;white-space:nowrap;">Company Net</div>
<div style="position:absolute;left:1420px;top:915px;width:8px;height:8px;box-sizing:border-box;background:#1b7a4a;border-radius:1.5px;"></div>
<div style="position:absolute;left:1434px;top:912.30px;font-size:13px;line-height:13px;color:#414850;font-weight:400;letter-spacing:-0.083px;white-space:nowrap;">Jobs Completed</div>
</body></html>
